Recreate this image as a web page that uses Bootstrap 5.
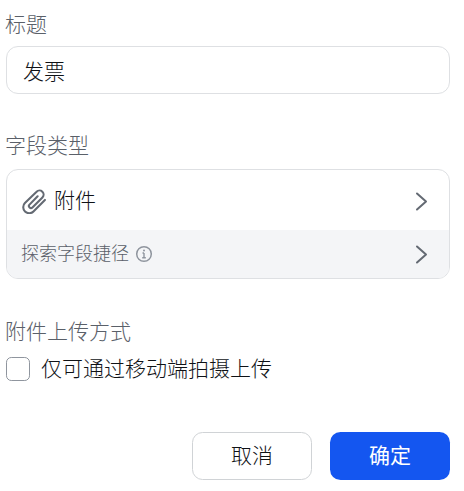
<!DOCTYPE html>
<html lang="zh">
<head>
<meta charset="utf-8">
<title>字段</title>
<link rel="stylesheet" href="https://cdn.jsdelivr.net/npm/bootstrap@5.3.0/dist/css/bootstrap.min.css">
<style>
html,body{height:491px;overflow:hidden}
body{font-family:"Liberation Sans","Noto Sans CJK SC",sans-serif;font-size:21px;font-weight:300;color:#0f1216;background:#fff;padding:9px 14px 0 6px}
.fld-label{display:block;font-size:21px;line-height:32px;color:#5a6069;margin:0 0 5px -1px}
.fld-input.form-control{height:48px;border:1.5px solid #dee0e3;border-radius:12px;padding:0 17px 0 16px;font-size:21px;font-weight:300;line-height:32px;color:#0f1216;box-shadow:none}
.fld-sec2{margin-top:36px}
.fld-sec2 .fld-label{margin-bottom:7px}
.fld-sec3{margin-top:37px}
.type-box{border:1.5px solid #dee0e3;border-radius:12px;overflow:hidden}
.type-row{height:60px;padding:2px 20px 0 15px}
.type-row2{height:48px;background:#f4f5f7;padding:0 20px 0 14px;font-size:18px;color:#5a6069}
.type-row svg.chev{width:15px;height:21px}
.clip{width:25px;height:25px;margin-right:7px}
.info{width:18px;height:18px;margin-left:6px}
.chk{width:24px;height:24px;border:1.5px solid #8f959e;border-radius:6px;margin:0;background:#fff;box-shadow:none!important}
.chk-row{gap:11px;margin-top:4px}
.chk-text{line-height:32px}
.act-row{margin-top:47px;gap:18px}
.act-btn.btn{width:120px;height:48px;border-radius:10.5px;font-size:21px;font-weight:300;line-height:32px;padding:0}
.act-cancel.btn{border:1.5px solid #d0d3d6;background:#fff;color:#0f1216}
.act-ok.btn{border:0;background:#1456f0;color:#fff;font-weight:400}
</style>
</head>
<body>
<label class="fld-label">标题</label>
<input class="form-control fld-input" value="发票">

<div class="fld-sec2">
  <div class="fld-label">字段类型</div>
  <div class="type-box">
    <div class="type-row d-flex align-items-center">
      <svg class="clip" viewBox="0 0 24 24" fill="none" stroke="#646a73" stroke-width="2" stroke-linecap="round" stroke-linejoin="round"><path d="M22 10.5 11 21.5a5.4 5.4 0 0 1-8.2-8L14 2.6a3.9 3.9 0 0 1 5.6 5.5L10 17.7a1.9 1.9 0 0 1-2.8-2.7L15 7"/></svg>
      <span>附件</span>
      <svg class="chev ms-auto" viewBox="0 0 15 21" fill="none" stroke="#646a73" stroke-width="2" stroke-linecap="round" stroke-linejoin="round"><path d="M3 2.5 12 10.5 3 18.5"/></svg>
    </div>
    <div class="type-row type-row2 d-flex align-items-center">
      <span>探索字段捷径</span>
      <svg class="info" viewBox="0 0 18 18" fill="none" stroke="#8f959e" stroke-width="1.5"><circle cx="9" cy="9" r="7.3"/><path d="M9 8v4.6M7.2 12.8h3.6M7.5 8H9" stroke-width="1.4"/><circle cx="9" cy="5.4" r="1" fill="#8f959e" stroke="none"/></svg>
      <svg class="chev ms-auto" viewBox="0 0 15 21" fill="none" stroke="#646a73" stroke-width="2" stroke-linecap="round" stroke-linejoin="round"><path d="M3 2.5 12 10.5 3 18.5"/></svg>
    </div>
  </div>
</div>

<div class="fld-sec3">
  <div class="fld-label">附件上传方式</div>
  <div class="d-flex align-items-center chk-row">
    <input class="form-check-input chk" type="checkbox">
    <span class="chk-text">仅可通过移动端拍摄上传</span>
  </div>
</div>

<div class="d-flex justify-content-end act-row">
  <button class="btn act-btn act-cancel" type="button">取消</button>
  <button class="btn act-btn act-ok" type="button">确定</button>
</div>
<script src="https://cdn.jsdelivr.net/npm/bootstrap@5.3.0/dist/js/bootstrap.bundle.min.js"></script>
</body>
</html>
